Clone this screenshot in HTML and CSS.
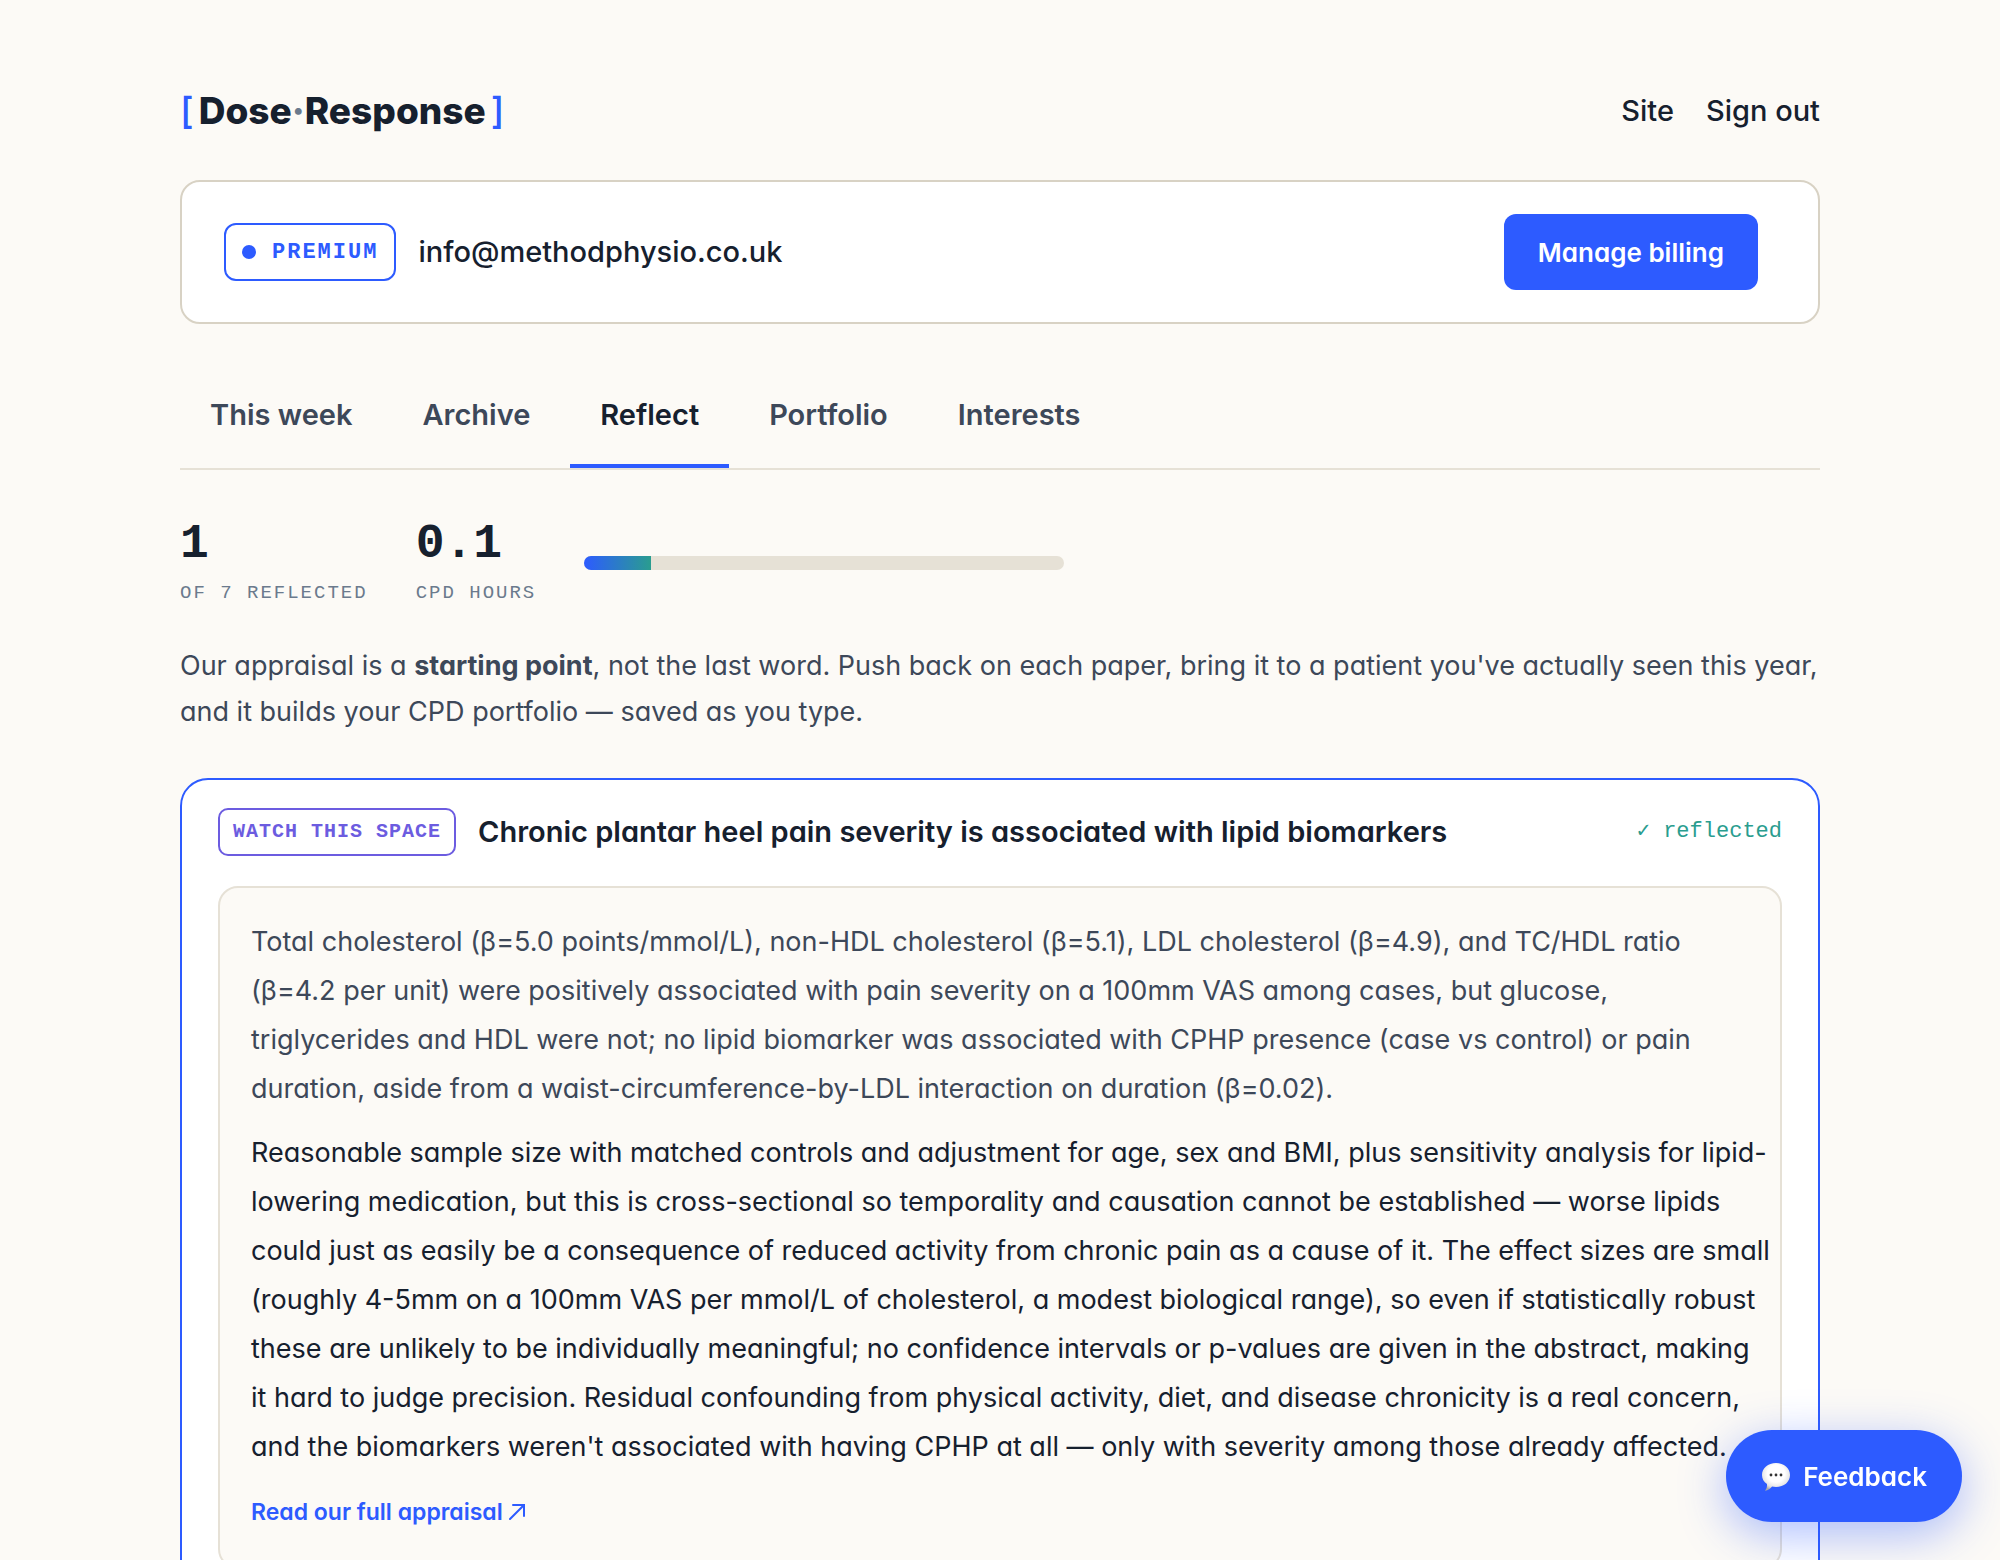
FILE: index.html
```html
<!DOCTYPE html>
<html lang="en">
<head>
    <meta charset="UTF-8">
    <meta name="viewport" content="width=device-width, initial-scale=1.0">
    <title>Dose·Response</title>
    <link rel="stylesheet" href="styles.css">
</head>
<body>
    <div class="page">
        <header class="header">
            <a class="logo" href="#"><span class="bracket">[</span><span class="logo-name">Dose<span class="dot">·</span>Response</span><span class="bracket">]</span></a>
            <nav class="header-links">
                <a href="#">Site</a>
                <a href="#">Sign out</a>
            </nav>
        </header>

        <!-- Account -->
        <section class="account">
            <span class="plan"><span class="plan-dot"></span>PREMIUM</span>
            <span class="email">info@methodphysio.co.uk</span>
            <button class="billing" type="button">Manage billing</button>
        </section>

        <nav class="tabs">
            <button class="tab" type="button">This week</button>
            <button class="tab" type="button">Archive</button>
            <button class="tab active" type="button">Reflect</button>
            <button class="tab" type="button">Portfolio</button>
            <button class="tab" type="button">Interests</button>
        </nav>

        <main>
            <!-- Progress -->
            <section class="stats">
                <div class="stat">
                    <strong>1</strong>
                    <span>OF 7 REFLECTED</span>
                </div>
                <div class="stat">
                    <strong>0.1</strong>
                    <span>CPD HOURS</span>
                </div>
                <div class="bar"><div class="bar-fill" style="width: 14%"></div></div>
            </section>

            <p class="intro">Our appraisal is a <b>starting point</b>, not the last word. Push back on each paper, bring it to a patient you've actually seen this year, and it builds your CPD portfolio — saved as you type.</p>

            <!-- Paper -->
            <article class="paper">
                <div class="paper-head">
                    <span class="verdict">WATCH THIS SPACE</span>
                    <h2>Chronic plantar heel pain severity is associated with lipid biomarkers</h2>
                    <span class="done">✓ reflected</span>
                </div>
                <div class="appraisal">
                    <p class="finding">Total cholesterol (β=5.0 points/mmol/L), non-HDL cholesterol (β=5.1), LDL cholesterol (β=4.9), and TC/HDL ratio (β=4.2&nbsp;per unit) were positively associated with pain severity on a 100mm VAS among cases, but glucose, triglycerides and HDL were not; no lipid biomarker was associated with CPHP presence (case vs control) or pain duration, aside from a waist-circumference-by-LDL interaction on duration (β=0.02).</p>
                    <p>Reasonable sample size with matched controls and adjustment for age, sex and BMI, plus sensitivity analysis for lipid-lowering medication, but this is cross-sectional so temporality and causation cannot be established — worse lipids could just as easily be a consequence of reduced activity from chronic pain as a cause of it. The effect sizes are small (roughly 4-5mm on a 100mm VAS per mmol/L of cholesterol, a modest biological range), so even if statistically robust these are unlikely to be individually meaningful; no confidence intervals or p-values are given in the abstract, making it&nbsp;hard to judge precision. Residual confounding from physical activity, diet, and disease chronicity is a real concern, and the biomarkers weren't associated with having CPHP at all — only with severity among those already affected.</p>
                    <a class="more" href="#">Read our full appraisal
                        <svg width="16" height="16" viewBox="0 0 16 16" fill="none" stroke="currentColor" stroke-width="2" stroke-linecap="round"><path d="M1 15L15 1M4 1H15V12"/></svg>
                    </a>
                </div>
            </article>
        </main>
    </div>

    <button class="feedback" type="button">
        <svg width="30" height="30" viewBox="0 0 30 30">
            <defs>
                <radialGradient id="bubble" cx="50%" cy="38%" r="62%">
                    <stop offset="0.5" stop-color="#ffffff"/>
                    <stop offset="0.8" stop-color="#e6e6e6"/>
                    <stop offset="1" stop-color="#a8a8a8"/>
                </radialGradient>
            </defs>
            <path fill="url(#bubble)" d="M15 1C7 1 1 6 1 13c0 4 1.800 7 5 9 .3 2.500-.5 5-2 6.800 3-.5 5.500-2 7-4.200 1.300.3 2.600.4 4 .4 8 0 14-5 14-12S23 1 15 1z"/>
            <circle cx="10" cy="13" r="1.400" fill="#333"/>
            <circle cx="15" cy="13" r="1.400" fill="#333"/>
            <circle cx="20" cy="13" r="1.400" fill="#333"/>
        </svg>
        Feedback
    </button>
</body>
</html>
```
FILE: styles.css
```css
* {
    box-sizing: border-box;
}
body {
    margin: 0;
    background: #fcfaf6;
    color: #16202e;
    font-family: Inter, "Liberation Sans", sans-serif;
    font-feature-settings: "cv11";
    font-size: 27px;
    line-height: 46px;
}
a {
    color: inherit;
    text-decoration: none;
}
button {
    border: none;
    background: none;
    font: inherit;
    font-feature-settings: inherit;
    color: inherit;
    cursor: pointer;
}
p {
    margin: 0;
}
.page {
    max-width: 1720px;
    margin: 0 auto;
    padding: 88px 40px 64px;
}

/* header */
.header {
    display: flex;
    justify-content: space-between;
    align-items: center;
    margin-bottom: 46px;
}
.logo {
    display: flex;
    gap: 5px;
    font-size: 37px;
    font-weight: 800;
}
.bracket {
    color: #2d5bff;
    font-weight: 500;
}
.dot {
    color: #6b7a8d;
}
.header-links {
    display: flex;
    gap: 32px;
    font-size: 29px;
    font-weight: 500;
}

/* account */
.account {
    display: flex;
    align-items: center;
    gap: 22px;
    padding: 32px 60px 32px 42px;
    background: #fff;
    border: 2px solid #d8d2c4;
    border-radius: 20px;
}
.plan {
    display: flex;
    align-items: center;
    gap: 16px;
    height: 58px;
    padding: 0 16px;
    border: 2px solid #2d5bff;
    border-radius: 12px;
    color: #2d5bff;
    font: bold 22px "Liberation Mono", monospace;
    letter-spacing: 2px;
}
.plan-dot {
    width: 14px;
    height: 14px;
    border-radius: 50%;
    background: #2d5bff;
}
.email {
    font-size: 29px;
    font-weight: 500;
}
.billing {
    margin-left: auto;
    padding: 16px 34px 14px;
    border-radius: 12px;
    background: #2d5bff;
    color: #fff;
    font-size: 26px;
    font-weight: 600;
}

/* tabs */
.tabs {
    display: flex;
    gap: 10px;
    margin-top: 68px;
    border-bottom: 2px solid #e6e1d6;
}
.tab {
    padding: 0 30px 26px;
    border-bottom: 4px solid transparent;
    color: #3d4859;
    font-size: 29px;
    font-weight: 600;
}
.tab.active {
    border-color: #2d5bff;
    color: #16202e;
}

/* stats */
.stats {
    display: flex;
    align-items: center;
    gap: 48px;
    margin-top: 48px;
}
.stat {
    display: flex;
    flex-direction: column;
    font-family: "Liberation Mono", monospace;
}
.stat strong {
    font-size: 48px;
    line-height: 52px;
}
.stat span {
    color: #6b7a8d;
    font-size: 19px;
    letter-spacing: 2px;
}
.bar {
    width: 480px;
    height: 14px;
    margin-bottom: 8px;
    border-radius: 7px;
    background: #e6e1d6;
    overflow: hidden;
}
.bar-fill {
    height: 100%;
    background: linear-gradient(90deg, #2d5bff, #2a9d8f);
}
.intro {
    margin-top: 27px;
    color: #3d4859;
}

/* paper */
.paper {
    margin-top: 43px;
    padding: 28px 36px 36px;
    background: #fff;
    border: 2px solid #2d5bff;
    border-radius: 28px;
}
.paper-head {
    display: flex;
    align-items: center;
    gap: 22px;
    margin-bottom: 30px;
}
.verdict {
    padding: 0 13px;
    border: 2px solid #6c5ce0;
    border-radius: 10px;
    color: #6c5ce0;
    font: bold 20px/44px "Liberation Mono", monospace;
    letter-spacing: 1px;
}
.paper-head h2 {
    margin: 0;
    font-size: 29px;
    font-weight: 600;
}
.done {
    margin-left: auto;
    color: #2a9d8f;
    font-family: "Liberation Mono", monospace;
    font-size: 22px;
}
.appraisal {
    padding: 29px 8px 30px 31px;
    background: #fcfaf6;
    border: 2px solid #e6e1d6;
    border-radius: 20px;
    line-height: 49px;
}
.appraisal p {
    margin-bottom: 15px;
}
.finding {
    color: #3d4859;
}
.more {
    color: #2d5bff;
    font-size: 23px;
    font-weight: 600;
}

/* floating button */
.feedback {
    position: fixed;
    right: 38px;
    bottom: 38px;
    display: flex;
    align-items: center;
    gap: 12px;
    padding: 24px 35px 22px;
    border-radius: 46px;
    background: #2d5bff;
    box-shadow: 0 12px 48px rgba(45, 91, 255, 0.4);
    color: #fff;
    font-size: 26px;
    font-weight: 600;
}
```
